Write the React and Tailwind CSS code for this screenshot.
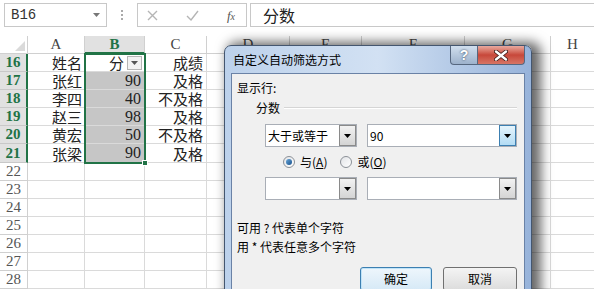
import React from "react";

const cols = "grid grid-cols-[28px_57px_60px_62px_83px_72px_103px_86px_1fr]";

const data = [
  [16, "姓名", "分", "成绩"],
  [17, "张红", "90", "及格"],
  [18, "李四", "40", "不及格"],
  [19, "赵三", "98", "及格"],
  [20, "黄宏", "50", "不及格"],
  [21, "张梁", "90", "及格"],
];

const blank = [22, 23, 24, 25, 26, 27, 28];

const Arrow = ({ color = "#000" }) => (
  <svg width="7" height="4" viewBox="0 0 7 4">
    <path d="M0 0h7L3.5 4z" fill={color} />
  </svg>
);

const Combo = ({ width, text, hot }) => (
  <div className={`${width} h-[23px] flex items-center bg-white border border-[#a9aeb6]`}>
    <span className="flex-1 pl-[2px] text-[12px] leading-none text-black">{text}</span>
    <div
      className={`w-[17px] h-[21px] flex items-center justify-center border ${
        hot
          ? "border-[#3c7fb1] bg-gradient-to-b from-[#e5f4fc] to-[#b3dcf4]"
          : "border-[#8a8a8a] bg-gradient-to-b from-[#f2f2f2] to-[#d4d4d4]"
      }`}
    >
      <Arrow />
    </div>
  </div>
);

const Radio = ({ checked, label, hot }) => (
  <div className="flex items-center gap-[5px]">
    <div className="w-[12px] h-[12px] rounded-full border border-[#8b9097] bg-gradient-to-br from-[#e2e4e7] to-[#ffffff] flex items-center justify-center">
      {checked && <div className="w-[6px] h-[6px] rounded-full bg-gradient-to-br from-[#6aa7d8] to-[#14508c]" />}
    </div>
    <span className="text-[12px] leading-[16px]">
      {label}(<span className="underline">{hot}</span>)
    </span>
  </div>
);

export default function App() {
  return (
    <div className="relative w-[594px] h-[289px] overflow-hidden bg-white font-['Noto_Sans_CJK_SC',sans-serif] text-[#222]">
      {/* formula bar */}
      <div className="flex items-start pt-[3px] h-[36px]">
        <div className="ml-[4px] w-[103px] h-[24px] border border-[#c8c8c8] flex items-center px-[6px]">
          <span className="flex-1 font-['Liberation_Mono',monospace] text-[14px] leading-none text-[#333]">B16</span>
          <Arrow color="#777" />
        </div>
        <div className="w-[30px] h-[24px] flex flex-col items-center justify-center gap-[2px]">
          <div className="w-[2px] h-[2px] bg-[#aaa]" />
          <div className="w-[2px] h-[2px] bg-[#aaa]" />
          <div className="w-[2px] h-[2px] bg-[#aaa]" />
        </div>
        <div className="w-[110px] h-[24px] border border-[#c8c8c8] flex items-center pl-[9px] pr-[11px] justify-between">
          <svg width="11" height="11" viewBox="0 0 11 11">
            <path d="M1 1l9 9M10 1l-9 9" stroke="#b5b5b5" strokeWidth="1.4" />
          </svg>
          <svg width="13" height="11" viewBox="0 0 13 11">
            <path d="M1 6l4 4 7-9" stroke="#b5b5b5" strokeWidth="1.4" fill="none" />
          </svg>
          <span className="font-['Liberation_Serif',serif] italic text-[13px] leading-none text-[#555]">
            f<span className="text-[10px]">x</span>
          </span>
        </div>
        <div className="ml-[3px] flex-1 h-[24px] border-y border-l border-[#c8c8c8] flex items-center pl-[12px] text-[16px] leading-none text-[#222]">
          分数
        </div>
      </div>

      {/* sheet */}
      <div className="relative">
        <div className={`${cols} h-[18px] font-['Liberation_Serif',serif] text-[15px] leading-none text-[#444]`}>
          <div className="relative border-r border-b border-[#d0d0d0]">
            <div className="absolute right-[2px] bottom-[2px] w-0 h-0 border-l-[10px] border-l-transparent border-b-[10px] border-b-[#dadada]" />
          </div>
          <div className="border-r border-b border-[#d0d0d0] flex items-center justify-center">A</div>
          <div className="bg-[#e1e1e1] border-r border-b-2 border-r-[#d0d0d0] border-b-[#217346] flex items-center justify-center font-bold text-[#217346]">B</div>
          <div className="border-r border-b border-[#d0d0d0] flex items-center justify-center">C</div>
          <div className="border-r border-b border-[#d0d0d0] flex items-center justify-center">D</div>
          <div className="border-r border-b border-[#d0d0d0] flex items-center justify-center">E</div>
          <div className="border-r border-b border-[#d0d0d0] flex items-center justify-center">F</div>
          <div className="border-r border-b border-[#d0d0d0] flex items-center justify-center">G</div>
          <div className="border-b border-[#d0d0d0] flex items-center justify-center">H</div>
        </div>

        {data.map((r, i) => (
          <div key={r[0]} className={`${cols} ${i === 5 ? "h-[19px]" : "h-[18px]"} text-[15px] leading-none`}>
            <div className="bg-[#e1e1e1] border-r-2 border-b border-r-[#217346] border-b-[#c8c8c8] flex items-center justify-center font-['Liberation_Serif',serif] font-bold text-[#217346]">
              {r[0]}
            </div>
            <div className="border-r border-b border-[#dadada] flex items-center justify-end pr-[2px]">{r[1]}</div>
            {i === 0 ? (
              <div className="border-r border-b border-[#dadada] flex items-center justify-end pr-[2px] gap-[3px]">
                <span>{r[2]}</span>
                <div className="w-[15px] h-[14px] border border-[#b5b5b5] bg-[#f2f2f2] flex items-center justify-center">
                  <Arrow color="#555" />
                </div>
              </div>
            ) : (
              <div className="bg-[#c6c6c6] border-r border-b border-[#dadada] flex items-center justify-end pr-[3px] font-['Liberation_Serif',serif] text-[16px]">
                {r[2]}
              </div>
            )}
            <div className="border-r border-b border-[#dadada] flex items-center justify-end pr-[3px]">{r[3]}</div>
            <div className="border-r border-b border-[#dadada]" />
            <div className="border-r border-b border-[#dadada]" />
            <div className="border-r border-b border-[#dadada]" />
            <div className="border-r border-b border-[#dadada]" />
            <div className="border-b border-[#dadada]" />
          </div>
        ))}

        {blank.map((n) => (
          <div key={n} className={`${cols} h-[18px] leading-none`}>
            <div className="border-r border-b border-[#d0d0d0] flex items-center justify-center font-['Liberation_Serif',serif] text-[15px] text-[#555]">
              {n}
            </div>
            <div className="border-r border-b border-[#dadada]" />
            <div className="border-r border-b border-[#dadada]" />
            <div className="border-r border-b border-[#dadada]" />
            <div className="border-r border-b border-[#dadada]" />
            <div className="border-r border-b border-[#dadada]" />
            <div className="border-r border-b border-[#dadada]" />
            <div className="border-r border-b border-[#dadada]" />
            <div className="border-b border-[#dadada]" />
          </div>
        ))}

        {/* selection */}
        <div className="absolute left-[84px] top-[17px] w-[62px] h-[111px] border-2 border-[#217346] pointer-events-none" />
        <div className="absolute left-[142px] top-[124px] w-[6px] h-[6px] bg-[#217346] border border-white" />
      </div>

      {/* dialog */}
      <div className="absolute left-[224px] top-[45px] w-[308px] h-[262px] rounded-t-[7px] border border-[#44566f] bg-gradient-to-r from-[#bcd1eb] via-[#d2e1f3] to-[#97b3da] shadow-[6px_0_12px_3px_rgba(0,0,0,0.6)] flex flex-col">
        <div className="h-[27px] flex items-start">
          <span className="flex-1 pl-[8px] pt-[6px] text-[12px] leading-[16px] text-black">自定义自动筛选方式</span>
          <div className="w-[28px] h-[19px] rounded-bl-[4px] border border-t-0 border-[#56677f] bg-gradient-to-b from-[#d1dfee] to-[#9db2cc] flex items-center justify-center font-['Liberation_Sans',sans-serif] font-bold text-[14px] leading-none text-white [text-shadow:0_0_2px_#26374f]">
            ?
          </div>
          <div className="mr-[6px] w-[47px] h-[19px] rounded-br-[4px] border border-t-0 border-l-0 border-[#56677f] bg-gradient-to-b from-[#e8a99f] via-[#c7473a] to-[#d77565] flex items-center justify-center">
            <svg width="14" height="11" viewBox="0 0 14 11">
              <path d="M2 1.5l10 8M12 1.5l-10 8" stroke="#3a1a18" strokeWidth="4" strokeLinecap="round" />
              <path d="M2 1.5l10 8M12 1.5l-10 8" stroke="#fff" strokeWidth="2.4" strokeLinecap="round" />
            </svg>
          </div>
        </div>

        <div className="mx-[6px] flex-1 border border-[#6a82a6] bg-[#f0f0f0] pl-[5px] pr-[7px] text-[12px] leading-[16px] text-black">
          <div className="mt-[6px]">显示行:</div>
          <div className="mt-[4px] flex items-center pl-[19px]">
            <span>分数</span>
            <div className="flex-1 ml-[4px] border-t border-b border-t-[#d5d5d5] border-b-white" />
          </div>
          <div className="mt-[8px] pl-[28px] flex justify-between">
            <Combo width="w-[92px]" text="大于或等于" />
            <Combo width="w-[150px]" text="90" hot />
          </div>
          <div className="mt-[7px] pl-[46px] flex items-center gap-[13px]">
            <Radio checked label="与" hot="A" />
            <Radio label="或" hot="O" />
          </div>
          <div className="mt-[7px] pl-[28px] flex justify-between">
            <Combo width="w-[92px]" text="" />
            <Combo width="w-[150px]" text="" />
          </div>
          <div className="mt-[20px]">可用 ? 代表单个字符</div>
          <div className="mt-[3px]">用 * 代表任意多个字符</div>
          <div className="mt-[12px] flex justify-end gap-[11px]">
            <div className="w-[72px] h-[24px] rounded-[3px] border border-[#3c7fb1] shadow-[inset_0_0_0_1px_#bfe3f8] bg-gradient-to-b from-[#eef6fc] to-[#d6e9f6] flex items-center justify-center">
              确定
            </div>
            <div className="w-[74px] h-[24px] rounded-[3px] border border-[#707070] bg-gradient-to-b from-[#f4f4f4] to-[#dcdcdc] flex items-center justify-center">
              取消
            </div>
          </div>
        </div>
      </div>
    </div>
  );
}
